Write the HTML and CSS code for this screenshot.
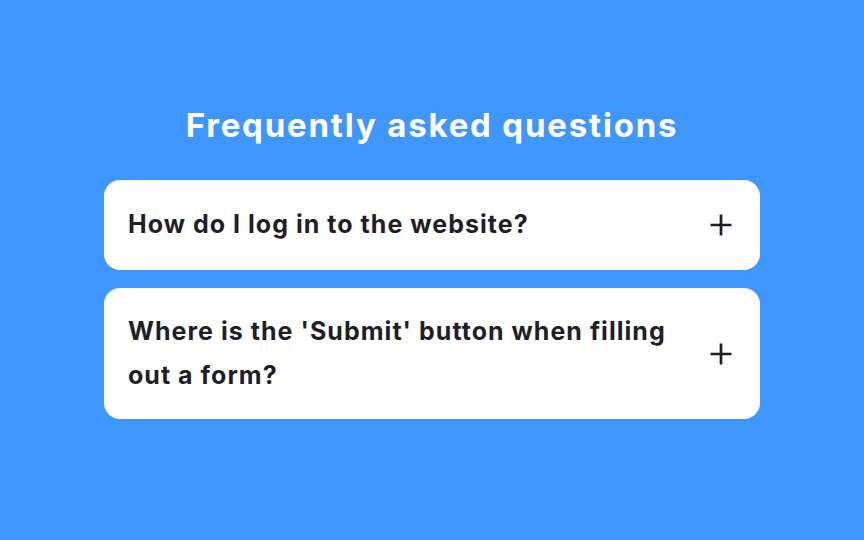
FILE: index.html
```html
<!DOCTYPE html>
<html lang="en">
<head>
<meta charset="utf-8">
<title>FAQ</title>
<link rel="stylesheet" href="styles.css">
</head>
<body>
<main class="faq">
  <h1 class="faq-title">Frequently asked questions</h1>
  <div class="faq-list">
    <div class="faq-item">
      <p class="faq-q">How do I log in to the website?</p>
      <svg class="faq-icon" viewBox="0 0 22 22" aria-hidden="true"><path d="M11 0.5v21M0.5 11h21" /></svg>
    </div>
    <div class="faq-item">
      <p class="faq-q">Where is the 'Submit' button when filling out a form?</p>
      <svg class="faq-icon" viewBox="0 0 22 22" aria-hidden="true"><path d="M11 0.5v21M0.5 11h21" /></svg>
    </div>
  </div>
</main>
</body>
</html>
```

FILE: styles.css
```css
html, body {
  margin: 0;
  padding: 0;
  height: 100%;
}
body {
  background: #3f96fc;
  font-family: Inter, "Noto Sans", sans-serif;
}
.faq {
  width: 656px;
  margin: 0 auto;
  padding-top: 105px;
}
.faq-title {
  margin: 0 0 34px;
  text-align: center;
  color: #ffffff;
  font-size: 33px;
  line-height: 41px;
  font-weight: 700;
  letter-spacing: 1.8px;
}
.faq-list {
  display: flex;
  flex-direction: column;
  gap: 18px;
}
.faq-item {
  box-sizing: border-box;
  min-height: 90px;
  display: flex;
  align-items: center;
  gap: 44px;
  background: #ffffff;
  border-radius: 16px;
  padding: 22px 28px 22px 24px;
}
.faq-q {
  flex: 1;
  margin: 0;
  color: #1e1f28;
  font-size: 25px;
  line-height: 43.5px;
  font-weight: 700;
  letter-spacing: 1.03px;
}
.faq-icon {
  width: 22px;
  height: 22px;
  flex: none;
  fill: none;
  stroke: #1e1f28;
  stroke-width: 2.7;
}
```
